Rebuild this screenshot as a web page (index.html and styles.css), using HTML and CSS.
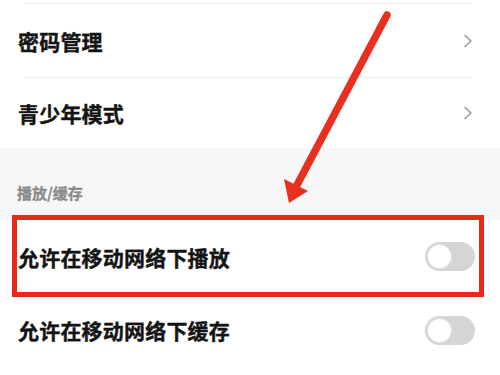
FILE: index.html
```html
<!DOCTYPE html>
<html lang="zh-CN">
<head>
<meta charset="utf-8">
<link rel="stylesheet" href="styles.css">
</head>
<body>
<div class="page">
  <div class="sep"></div>
  <div class="row row-a">
    <span class="label">密码管理</span>
    <svg class="chev" width="10" height="14" viewBox="0 0 10 14"><polyline points="2,1.5 8,7 2,12.5" fill="none" stroke="#9a9a9a" stroke-width="1.6" stroke-linecap="round" stroke-linejoin="round"/></svg>
  </div>
  <div class="sep"></div>
  <div class="row row-b">
    <span class="label">青少年模式</span>
    <svg class="chev" width="10" height="14" viewBox="0 0 10 14"><polyline points="2,1.5 8,7 2,12.5" fill="none" stroke="#9a9a9a" stroke-width="1.6" stroke-linecap="round" stroke-linejoin="round"/></svg>
  </div>
  <div class="section-head">播放/缓存</div>
  <div class="row row-c highlighted">
    <span class="label">允许在移动网络下播放</span>
    <span class="toggle"><span class="knob"></span></span>
  </div>
  <div class="row row-d">
    <span class="label">允许在移动网络下缓存</span>
    <span class="toggle"><span class="knob"></span></span>
  </div>
  <svg class="arrow" width="500" height="375" viewBox="0 0 500 375">
    <line x1="387" y1="15" x2="297" y2="185" stroke="#e8301e" stroke-width="7.5" stroke-linecap="round"/>
    <polygon points="284,179 308,191 289,203" fill="#e8301e"/>
  </svg>
</div>
</body>
</html>
```

FILE: styles.css
```css
html, body {
  margin: 0;
  padding: 0;
  background: #ffffff;
}
.page {
  position: relative;
  width: 500px;
  height: 375px;
  overflow: hidden;
  font-family: "Noto Sans CJK SC", "Noto Sans", sans-serif;
  background: #ffffff;
}
.sep {
  height: 1px;
  background: #ececec;
  margin: 0 28px 0 24px;
}
.page > .sep:first-child {
  margin-top: 3px;
}
.row {
  display: flex;
  align-items: center;
  justify-content: space-between;
  padding: 0 25px 0 18px;
  background: #ffffff;
}
.row-a { height: 73px; }
.row-b { height: 70px; }
.row-c { height: 73px; }
.row-d { height: 74px; }
.label {
  font-size: 21px;
  font-weight: 700;
  color: #141414;
  letter-spacing: 0.2px;
  -webkit-text-stroke: 0.4px #141414;
}
.chev {
  display: block;
  margin-right: 2px;
}
.section-head {
  height: 72px;
  box-sizing: border-box;
  padding: 34px 0 0 17px;
  background: #f7f7f7;
  font-size: 15px;
  font-weight: 700;
  color: #8a8a8a;
  -webkit-text-stroke: 0.3px #8a8a8a;
}
.toggle {
  position: relative;
  display: block;
  width: 50px;
  height: 29px;
  border-radius: 15px;
  background: #d5d5d5;
}
.knob {
  position: absolute;
  left: 2px;
  top: 2px;
  width: 25px;
  height: 25px;
  box-sizing: border-box;
  border-radius: 50%;
  background: #ffffff;
  border: 1px solid #e2e2e2;
}
.highlighted {
  position: relative;
}
.highlighted::after {
  content: "";
  position: absolute;
  left: 12px;
  top: -5px;
  width: 472px;
  height: 82px;
  box-sizing: border-box;
  border: 5px solid #e62a1c;
  pointer-events: none;
}
.arrow {
  position: absolute;
  left: 0;
  top: 0;
  pointer-events: none;
}
```
